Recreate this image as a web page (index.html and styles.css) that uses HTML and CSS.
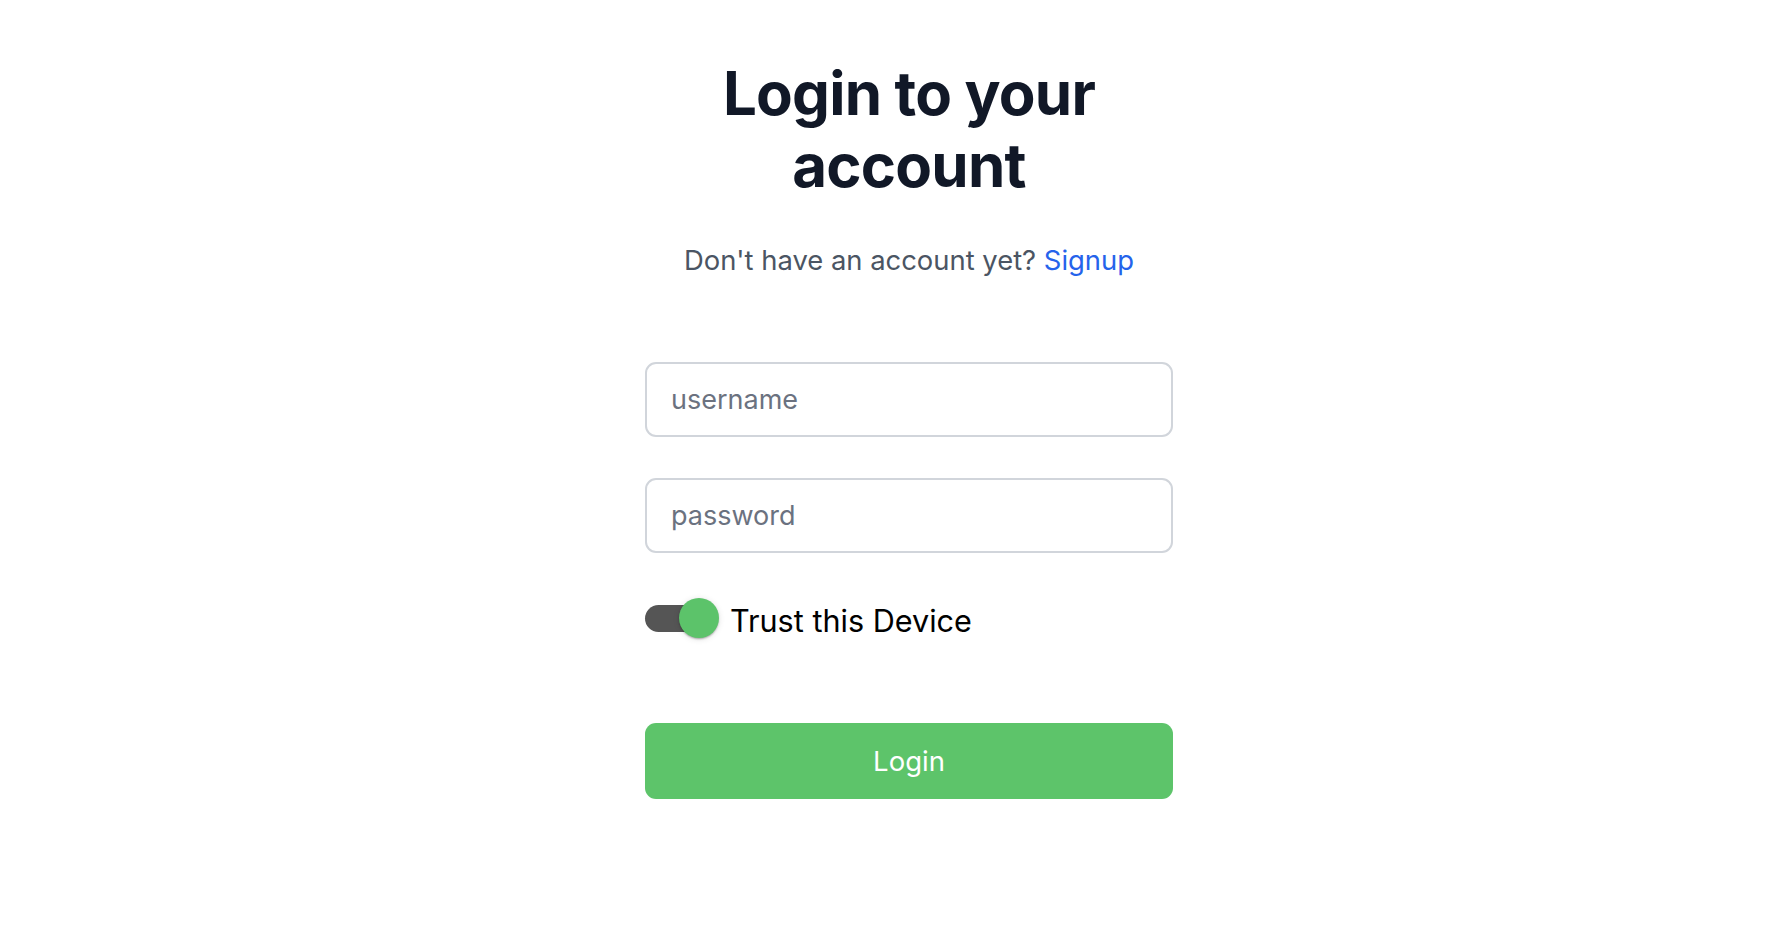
FILE: index.html
```html
<!DOCTYPE html>
<html lang="en">
<head>
<meta charset="utf-8">
<title>Login</title>
<link rel="stylesheet" href="styles.css">
</head>
<body>
<main class="page">
  <h1 class="title">Login to your<br>account</h1>
  <p class="subtitle">Don't have an account yet? <a class="link" href="#">Signup</a></p>
  <form class="form">
    <input class="field" type="text" placeholder="username">
    <input class="field" type="password" placeholder="password">
    <label class="trust">
      <span class="switch"><span class="track"></span><span class="thumb"></span></span>
      <span class="trust-label">Trust this Device</span>
    </label>
    <button class="btn" type="button">Login</button>
  </form>
</main>
</body>
</html>
```
FILE: styles.css
```css
html, body {
  margin: 0;
  padding: 0;
  background: #ffffff;
}
body {
  font-family: Inter, "Noto Sans", sans-serif;
}
.page {
  display: flex;
  flex-direction: column;
  align-items: center;
  padding-top: 57px;
  padding-left: 28px;
}
.title {
  margin: 0;
  font-size: 60px;
  line-height: 72px;
  font-weight: 700;
  color: #111827;
  text-align: center;
  letter-spacing: -0.8px;
}
.subtitle {
  margin: 41px 0 0;
  font-size: 27.4px;
  line-height: 36px;
  color: #4b5563;
}
.link {
  color: #2563eb;
  text-decoration: none;
}
.form {
  width: 528px;
  margin-top: 84px;
  display: flex;
  flex-direction: column;
}
.field {
  box-sizing: border-box;
  height: 75px;
  width: 100%;
  border: 2px solid #d1d5db;
  border-radius: 11px;
  padding: 0 24px;
  font-family: Inter, sans-serif;
  font-size: 27px;
  color: #111827;
  outline: none;
}
.field::placeholder {
  color: #6b7280;
}
.field + .field {
  margin-top: 41px;
}
.trust {
  display: flex;
  align-items: center;
  margin-top: 45px;
  height: 40px;
}
.switch {
  position: relative;
  width: 74px;
  height: 40px;
  flex: none;
}
.track {
  position: absolute;
  left: 0;
  top: 7px;
  width: 66px;
  height: 27px;
  border-radius: 14px;
  background: #555555;
}
.thumb {
  position: absolute;
  left: 34px;
  top: 0;
  width: 40px;
  height: 40px;
  border-radius: 50%;
  background: #5cc36a;
  box-shadow: 0 2px 2px -1px rgba(0,0,0,0.2), 0 1px 2px rgba(0,0,0,0.14), 0 1px 6px rgba(0,0,0,0.12);
}
.trust-label {
  margin-left: 11px;
  font-family: Inter, sans-serif;
  font-size: 30.6px;
  line-height: 40px;
  color: #000000;
  position: relative;
  top: 3px;
}
.btn {
  margin-top: 85px;
  height: 76px;
  border: none;
  border-radius: 11px;
  background: #5dc46a;
  color: #ffffff;
  font-family: Inter, sans-serif;
  font-size: 27.5px;
  font-weight: 400;
}
```
